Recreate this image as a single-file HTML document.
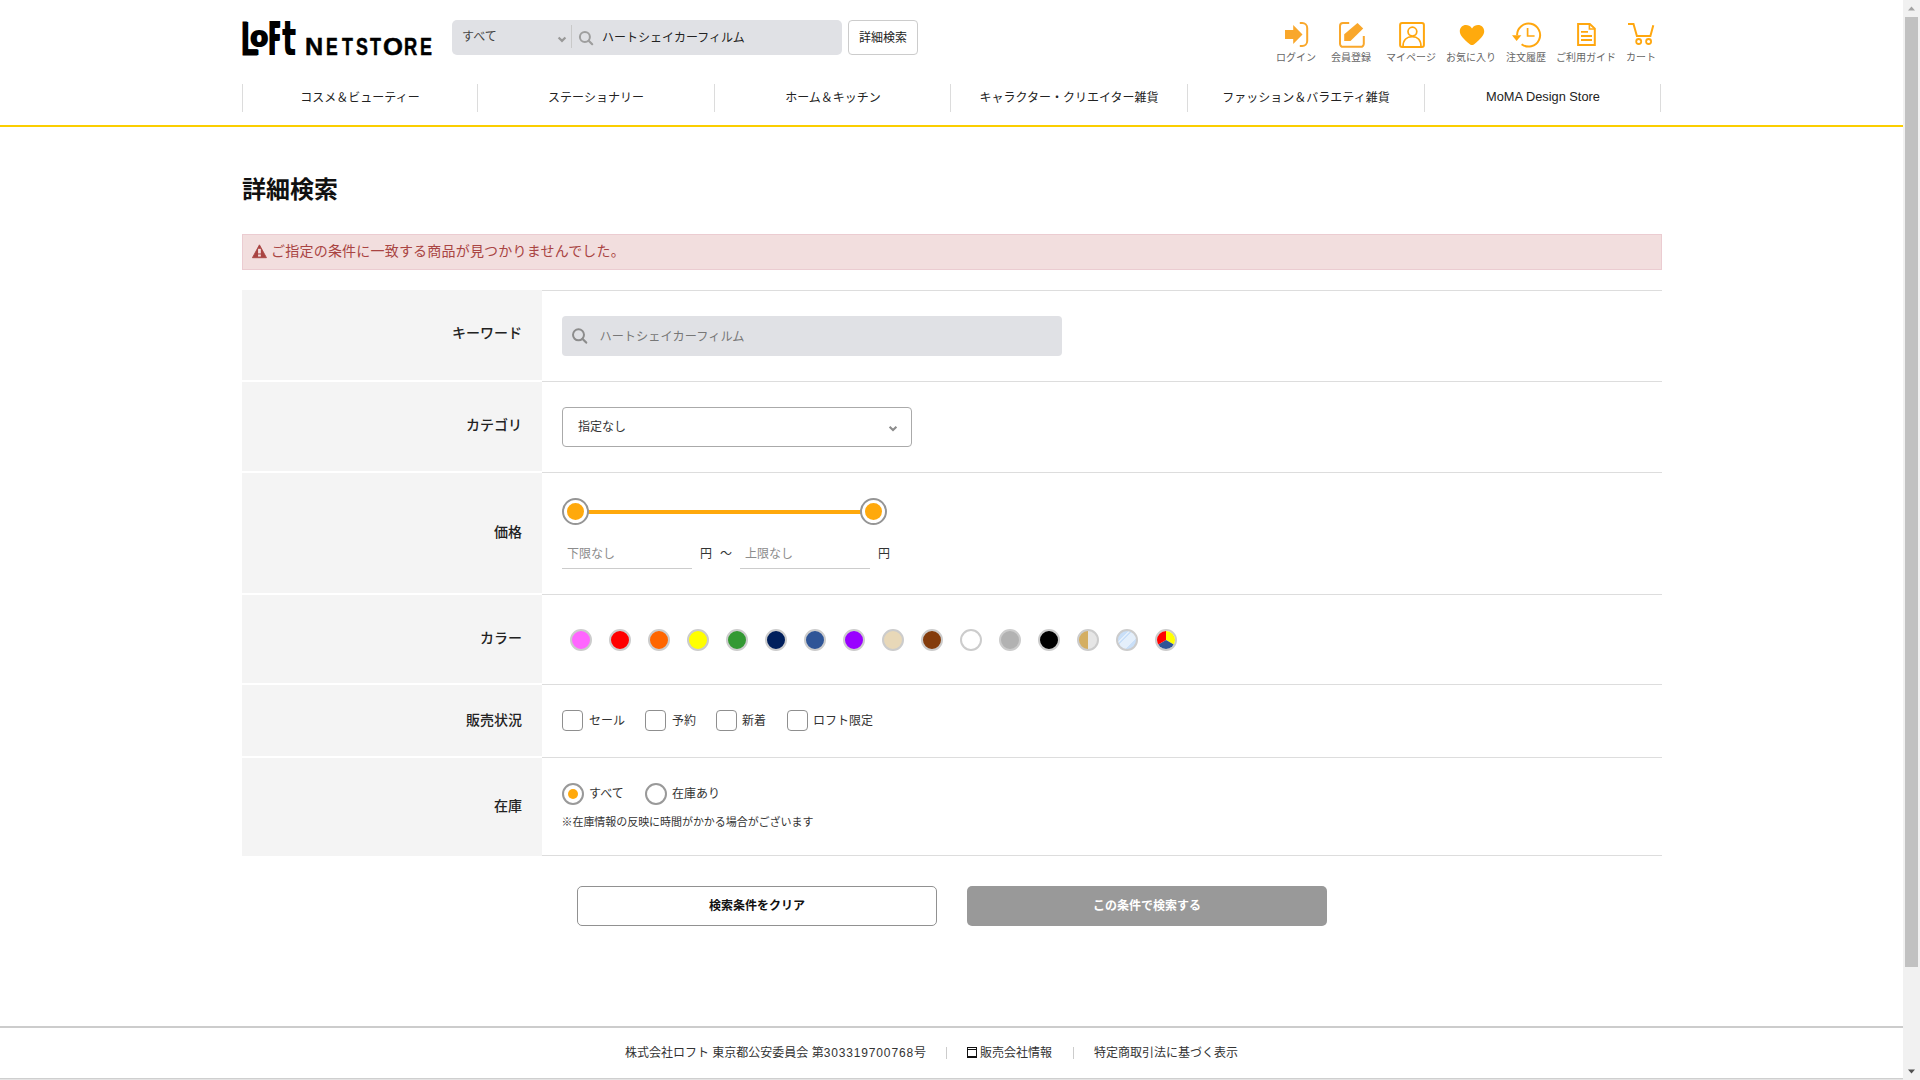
<!DOCTYPE html>
<html lang="ja">
<head>
<meta charset="utf-8">
<title>詳細検索 | LOFT NETSTORE</title>
<style>
*{box-sizing:border-box;margin:0;padding:0}
html,body{width:1920px;height:1080px;overflow:hidden;background:#fff}
body{position:relative;font-family:"Liberation Sans","Noto Sans CJK JP",sans-serif;font-size:12px;color:#222;line-height:1}
.abs{position:absolute}
.t{position:absolute;white-space:nowrap;line-height:1}
/* scrollbar */
#sb{left:1903px;top:0;width:17px;height:1080px;background:#f1f1f1}
#sbthumb{left:1905px;top:17px;width:13px;height:950px;background:#c1c1c1}
/* header */
.lg{position:absolute;white-space:nowrap;line-height:1;font-weight:bold;color:#000;transform-origin:0 0;font-family:"Liberation Sans",sans-serif}
.ns{position:absolute;top:34.6px;font-weight:bold;font-size:24.4px;line-height:1;color:#000;transform-origin:0 0;font-family:"Liberation Sans",sans-serif;-webkit-text-stroke:.5px #000}
#sbox{left:452px;top:20px;width:390px;height:35px;background:#e0e1e5;border-radius:5px}
#sdiv{left:571px;top:25px;width:1px;height:23px;background:#c9c9c9}
#dbtn{left:848px;top:20px;width:70px;height:35px;border:1px solid #ccc;border-radius:4px;background:#fff}
.ico{position:absolute;top:20px}
.ilab{font-size:10px;color:#666;transform:translateX(-50%)}
/* nav */
.nd{position:absolute;top:84px;width:1px;height:28px;background:#dcdcdc}
.nt{font-size:12px;color:#222;transform:translateX(-50%);top:92px}
#yline{left:0;top:125px;width:1903px;height:2px;background:#fbce00}
/* title */
#h1{left:242px;top:178px;font-size:24px;font-weight:bold;color:#111}
#alert{left:242px;top:234px;width:1420px;height:36px;background:#f2dede;border:1px solid #ebccd1}
#alertt{left:271.1px;top:244px;font-size:14px;letter-spacing:.2px;color:#a94442}
/* table */
.th{position:absolute;left:242px;width:300px;background:#f4f4f4}
.thl{position:absolute;right:20px;font-size:14px;font-weight:500;color:#222;white-space:nowrap;line-height:1}
.ln{position:absolute;left:542px;width:1120px;height:1px;background:#ddd}
.inp{position:absolute;background:#e0e1e5;border-radius:4px}
.sw{position:absolute;top:629px;width:22px;height:22px;border-radius:50%;border:2px solid #ccc;overflow:hidden}
.cb{position:absolute;top:710px;width:21px;height:21px;border:1px solid #8f8f8f;border-radius:4px;background:#fff}
.cl{top:715px;font-size:12px;color:#333}
.rd{position:absolute;top:783px;width:22px;height:22px;border:2px solid #999;border-radius:50%;background:#fff}
.btn{position:absolute;top:886px;width:360px;height:40px;border-radius:5px;font-weight:bold;font-size:12px;text-align:center;line-height:38px}
/* footer */
#fline{left:0;top:1026px;width:1903px;height:2px;background:#ccc}
#fline2{left:0;top:1078px;width:1903px;height:2px;background:linear-gradient(#cfcfcf 0,#cfcfcf 50%,#e4e4e4 50%,#e4e4e4 100%)}
.ft{top:1047px;font-size:12px;color:#333}
</style>
</head>
<body>
<!-- header -->
<div id="logo" class="abs" style="left:0;top:0"><span class="lg" style="left:241.3px;top:13.8px;font-size:48.8px;transform:scale(.57,1);-webkit-text-stroke:1px #000;text-shadow:1px 0 #000,2px 0 #000">L</span><span class="lg" style="left:250.4px;top:22.2px;font-size:28.5px;-webkit-text-stroke:2.2px #000">o</span><span class="lg" style="left:268.3px;top:16px;font-family:'DejaVu Sans',sans-serif;font-size:46.6px;transform:scale(.362,1);text-shadow:1.1px 0 #000,2.2px 0 #000,3.3px 0 #000,4.4px 0 #000,5.5px 0 #000">F</span><span class="lg" style="left:282.2px;top:14px;font-family:'DejaVu Sans',sans-serif;font-size:48.6px;transform:scale(.612,1)">t</span></div>
<div id="netstore" class="abs" style="left:0;top:0"><span class="ns" style="left:305.1px;transform:scaleX(1.03)">N</span><span class="ns" style="left:326.3px;transform:scaleX(0.72)">E</span><span class="ns" style="left:341.6px;transform:scaleX(0.73)">T</span><span class="ns" style="left:355.7px;transform:scaleX(0.73)">S</span><span class="ns" style="left:370.1px;transform:scaleX(0.735)">T</span><span class="ns" style="left:382.8px;transform:scaleX(1.05)">O</span><span class="ns" style="left:404.0px;transform:scaleX(0.75)">R</span><span class="ns" style="left:419.8px;transform:scaleX(0.735)">E</span></div>
<div id="sbox" class="abs"></div>
<div class="t" style="left:462px;top:31px;font-size:12px;color:#444">すべて</div>
<svg class="abs" style="left:556px;top:34px" width="12" height="10" viewBox="556 34 12 10"><path d="M558.6 37.5 L562 40.9 L565.4 37.5" fill="none" stroke="#999" stroke-width="2.2"/></svg>
<div id="sdiv" class="abs"></div>
<svg class="abs" style="left:576px;top:28px" width="20" height="20" viewBox="576 28 20 20"><circle cx="584.9" cy="36.9" r="5" fill="none" stroke="#9e9e9e" stroke-width="2"/><path d="M588.7 40.7 L592.2 44.2" stroke="#9e9e9e" stroke-width="2.2" stroke-linecap="round"/></svg>
<div class="t" style="left:602px;top:32px;font-size:12px;color:#222">ハートシェイカーフィルム</div>
<div id="dbtn" class="abs"></div>
<div class="t" style="left:859px;top:32px;font-size:12px;color:#222">詳細検索</div>

<!-- header icons placeholder -->
<svg class="abs" style="left:1270px;top:18px" width="400" height="34" viewBox="1270 18 400 34">
<g fill="#f9a72b" stroke="none">
<path d="M1285 30.1 H1293.2 V25.1 L1302.5 34.4 L1293.2 43.9 V38.9 H1285 Z"/>
<path d="M1344.2 34.2 L1357.5 23 L1363.2 28.5 L1350.5 40.9 L1344.2 40.9 Z"/>
</g>
<g fill="none" stroke="#f9a72b" stroke-width="2">
<path d="M1299.8 23.1 H1302.2 A5 5 0 0 1 1307.2 28.1 V41 A5 5 0 0 1 1302.2 46 H1299.8"/>
<path d="M1349.2 23 H1343 A3 3 0 0 0 1340 26 V43.8 A3 3 0 0 0 1343 46.8 H1360.8 A3 3 0 0 0 1363.8 43.8 V36"/>
</g>
<g fill="none" stroke="#ffa70f">
<rect x="1400.1" y="23" width="23.8" height="23.9" rx="2" stroke-width="2"/>
<circle cx="1412.4" cy="31.6" r="4.4" stroke-width="1.7"/>
<path d="M1403 46.5 C1403 40 1407 36.6 1412.2 36.6 C1417.4 36.6 1421 40 1421 46.5" stroke-width="1.7"/>
</g>
<path d="M1472 28.4 C1470.5 25.8 1468 24.9 1466 24.9 C1462.5 24.9 1459.8 27.6 1459.8 31.2 C1459.8 35.5 1463.5 38.8 1469.5 44 C1470.6 44.9 1471.3 45.1 1472 45.1 C1472.7 45.1 1473.4 44.9 1474.5 44 C1480.5 38.8 1484.2 35.5 1484.2 31.2 C1484.2 27.6 1481.5 24.9 1478 24.9 C1476 24.9 1473.5 25.8 1472 28.4 Z" fill="#ffaa0d"/>
<g fill="none" stroke="#ffa70f">
<path d="M1517.1 35.3 A11.5 11.5 0 1 1 1521.6 44.2" stroke-width="2"/>
<path d="M1527.6 28.1 V36 H1534.6" stroke-width="1.7"/>
</g>
<path d="M1512 35.3 H1521.4 L1516.6 40.9 Z" fill="#ffa70f"/>
<g fill="none" stroke="#ffa70f">
<path d="M1578.1 24 H1589.8 L1594.8 28.6 V45 H1578.1 Z" stroke-width="2"/>
<path d="M1589.4 24 V29 H1594.8" stroke-width="1.6"/>
<path d="M1581 31.9 H1588 M1581 36 H1592 M1581 40 H1592" stroke-width="1.8"/>
<path d="M1628 24.1 H1633.5 L1636.9 36 H1650.4 L1653.3 25.2" stroke-width="2"/>
<circle cx="1638.7" cy="41.5" r="2.5" stroke-width="1.8"/>
<circle cx="1648.6" cy="41.5" r="2.5" stroke-width="1.8"/>
</g>
</svg>
<div class="t ilab" style="left:1296px;top:53px">ログイン</div>
<div class="t ilab" style="left:1351px;top:53px">会員登録</div>
<div class="t ilab" style="left:1411px;top:53px">マイページ</div>
<div class="t ilab" style="left:1471px;top:53px">お気に入り</div>
<div class="t ilab" style="left:1526px;top:53px">注文履歴</div>
<div class="t ilab" style="left:1586px;top:53px">ご利用ガイド</div>
<div class="t ilab" style="left:1641px;top:53px">カート</div>

<!-- nav -->
<div class="nd" style="left:242px"></div>
<div class="nd" style="left:477px"></div>
<div class="nd" style="left:714px"></div>
<div class="nd" style="left:950px"></div>
<div class="nd" style="left:1187px"></div>
<div class="nd" style="left:1424px"></div>
<div class="nd" style="left:1660px"></div>
<div class="t nt" style="left:360px">コスメ＆ビューティー</div>
<div class="t nt" style="left:596px">ステーショナリー</div>
<div class="t nt" style="left:833px">ホーム＆キッチン</div>
<div class="t nt" style="left:1069px">キャラクター・クリエイター雑貨</div>
<div class="t nt" style="left:1306px">ファッション＆バラエティ雑貨</div>
<div class="t nt" style="left:1543px;font-size:12.8px;top:91px">MoMA Design Store</div>
<div id="yline" class="abs"></div>

<!-- title -->
<div id="h1" class="t">詳細検索</div>
<div id="alert" class="abs"></div>
<svg class="abs" style="left:251.8px;top:243.9px" width="14.9" height="15" viewBox="0 0 14 14" preserveAspectRatio="none"><path d="M7 0.8 L13.6 12.8 L0.4 12.8 Z" fill="#a94442" stroke="#a94442" stroke-width="0.8" stroke-linejoin="round"/><rect x="5.7" y="4.5" width="2.6" height="4.3" fill="#f2dede"/><rect x="5.7" y="9.8" width="2.6" height="1.9" fill="#f2dede"/></svg>
<div id="alertt" class="t">ご指定の条件に一致する商品が見つかりませんでした。</div>

<!-- table -->
<div class="th" style="top:290px;height:90px"><span class="thl" style="top:326px;top:36px">キーワード</span></div>
<div class="th" style="top:382px;height:89px"><span class="thl" style="top:36px">カテゴリ</span></div>
<div class="th" style="top:473px;height:120px"><span class="thl" style="top:52px">価格</span></div>
<div class="th" style="top:595px;height:88px"><span class="thl" style="top:36px">カラー</span></div>
<div class="th" style="top:685px;height:71px"><span class="thl" style="top:28px">販売状況</span></div>
<div class="th" style="top:758px;height:98px"><span class="thl" style="top:41px">在庫</span></div>
<div class="ln" style="top:290px"></div>
<div class="ln" style="top:381px"></div>
<div class="ln" style="top:472px"></div>
<div class="ln" style="top:594px"></div>
<div class="ln" style="top:684px"></div>
<div class="ln" style="top:757px"></div>
<div class="ln" style="top:855px"></div>

<!-- keyword -->
<div class="inp" style="left:562px;top:316px;width:500px;height:40px"></div>
<svg class="abs" style="left:571px;top:327px" width="18" height="18" viewBox="571 327 18 18"><circle cx="578.5" cy="334.8" r="5.5" fill="none" stroke="#8c8c8c" stroke-width="2"/><path d="M582.6 338.9 L586.2 342.6" stroke="#8c8c8c" stroke-width="2.2" stroke-linecap="round"/></svg>
<div class="t" style="left:599.5px;top:331px;font-size:12.2px;color:#777">ハートシェイカーフィルム</div>

<!-- category -->
<div class="abs" style="left:562px;top:407px;width:350px;height:40px;border:1px solid #aaa;border-radius:4px;background:#fff"></div>
<div class="t" style="left:578px;top:421px;font-size:12px;color:#333">指定なし</div>
<svg class="abs" style="left:888px;top:424.7px" width="10" height="8" viewBox="0 0 10 8"><path d="M1.6 1.7 L5 5.1 L8.4 1.7" fill="none" stroke="#8c8c8c" stroke-width="2.1"/></svg>

<!-- price -->
<div class="abs" style="left:575px;top:510px;width:298px;height:4px;background:#ffa90c"></div>
<div class="abs" style="left:562px;top:498px;width:27px;height:27px;border-radius:50%;border:2px solid #959595;background:#fff"></div>
<div class="abs" style="left:567px;top:503px;width:17px;height:17px;border-radius:50%;background:#ffa90c"></div>
<div class="abs" style="left:860px;top:498px;width:27px;height:27px;border-radius:50%;border:2px solid #959595;background:#fff"></div>
<div class="abs" style="left:865px;top:503px;width:17px;height:17px;border-radius:50%;background:#ffa90c"></div>
<div class="t" style="left:567px;top:548px;font-size:12px;color:#8c8c8c">下限なし</div>
<div class="abs" style="left:562px;top:568px;width:130px;height:1px;background:#ccc"></div>
<div class="t" style="left:700px;top:548px;font-size:12px;color:#333">円</div>
<div class="t" style="left:720px;top:548px;font-size:12px;color:#333">～</div>
<div class="t" style="left:745px;top:548px;font-size:12px;color:#8c8c8c">上限なし</div>
<div class="abs" style="left:740px;top:568px;width:130px;height:1px;background:#ccc"></div>
<div class="t" style="left:878px;top:548px;font-size:12px;color:#333">円</div>

<!-- colours -->
<div class="sw" style="left:570px;background:#ff66ff"></div>
<div class="sw" style="left:609px;background:#ff0000"></div>
<div class="sw" style="left:648px;background:#ff6600"></div>
<div class="sw" style="left:687px;background:#ffff00"></div>
<div class="sw" style="left:726px;background:#339933"></div>
<div class="sw" style="left:765px;background:#001f5c"></div>
<div class="sw" style="left:804px;background:#2f5597"></div>
<div class="sw" style="left:843px;background:#9900ff"></div>
<div class="sw" style="left:882px;background:#e8d8b8"></div>
<div class="sw" style="left:921px;background:#843c0c"></div>
<div class="sw" style="left:960px;background:#ffffff"></div>
<div class="sw" style="left:999px;background:#b2b2b2"></div>
<div class="sw" style="left:1038px;background:#000000"></div>
<div class="sw" style="left:1077px;background:linear-gradient(90deg,#d4ae62 0,#d4ae62 50%,#e6e6e6 50%,#e6e6e6 100%)"></div>
<div class="sw" style="left:1116px;background:linear-gradient(135deg,#c9dff8 0,#c9dff8 30%,#e4effb 30%,#e4effb 36%,#c9dff8 36%,#c9dff8 40%,#e4effb 40%,#e4effb 70%,#c9dff8 70%,#c9dff8 100%)"></div>
<div class="sw" style="left:1155px"><svg width="18" height="18" viewBox="-9 -9 18 18" style="display:block"><path d="M0 0 L0 -10 A10 10 0 0 1 8.66 5 Z" fill="#ffff00"/><path d="M0 0 L8.66 5 A10 10 0 0 1 -8.66 5 Z" fill="#2f5597"/><path d="M0 0 L-8.66 5 A10 10 0 0 1 0 -10 Z" fill="#ff0000"/></svg></div>


<!-- sale status -->
<div class="cb" style="left:562px"></div><div class="t cl" style="left:589px">セール</div>
<div class="cb" style="left:645px"></div><div class="t cl" style="left:672px">予約</div>
<div class="cb" style="left:716px"></div><div class="t cl" style="left:742px">新着</div>
<div class="cb" style="left:787px"></div><div class="t cl" style="left:813px">ロフト限定</div>

<!-- stock -->
<div class="rd" style="left:562px"></div>
<div class="abs" style="left:567.7px;top:788.8px;width:10.5px;height:10.5px;border-radius:50%;background:#ffa90c"></div>
<div class="t" style="left:589px;top:788px;font-size:12px;color:#333">すべて</div>
<div class="rd" style="left:645px"></div>
<div class="t" style="left:672px;top:788px;font-size:12px;color:#333">在庫あり</div>
<div class="t" style="left:561.5px;top:817px;font-size:11px;letter-spacing:-.05px;color:#333">※在庫情報の反映に時間がかかる場合がございます</div>

<!-- buttons -->
<div class="btn" style="left:577px;border:1px solid #919191;background:#fff;color:#111">検索条件をクリア</div>
<div class="btn" style="left:967px;background:#999;color:#fff;line-height:40px">この条件で検索する</div>

<!-- footer -->
<div id="fline" class="abs"></div>
<div class="t ft" style="left:625px">株式会社ロフト 東京都公安委員会 第<span style="letter-spacing:.85px">303319700768</span>号</div>
<div class="abs" style="left:946px;top:1047px;width:1px;height:12px;background:#ccc"></div>
<div class="abs" style="left:967px;top:1047px;width:10px;height:11px;border:1px solid #111;border-bottom-width:2px"></div><div class="abs" style="left:967px;top:1049px;width:10px;height:1px;background:#111"></div>
<div class="t ft" style="left:980px">販売会社情報</div>
<div class="abs" style="left:1073px;top:1047px;width:1px;height:12px;background:#ccc"></div>
<div class="t ft" style="left:1094px">特定商取引法に基づく表示</div>
<div id="fline2" class="abs"></div>

<!-- scrollbar -->
<div id="sb" class="abs"></div>
<div id="sbthumb" class="abs"></div>
<svg class="abs" style="left:1903px;top:0" width="17" height="17" viewBox="0 0 17 17"><path d="M8.5 6.5 L12 10.5 L5 10.5 Z" fill="#a3a3a3"/></svg>
<svg class="abs" style="left:1903px;top:1063px" width="17" height="17" viewBox="0 0 17 17"><path d="M8.5 10.5 L12 6.5 L5 6.5 Z" fill="#505050"/></svg>
</body>
</html>
